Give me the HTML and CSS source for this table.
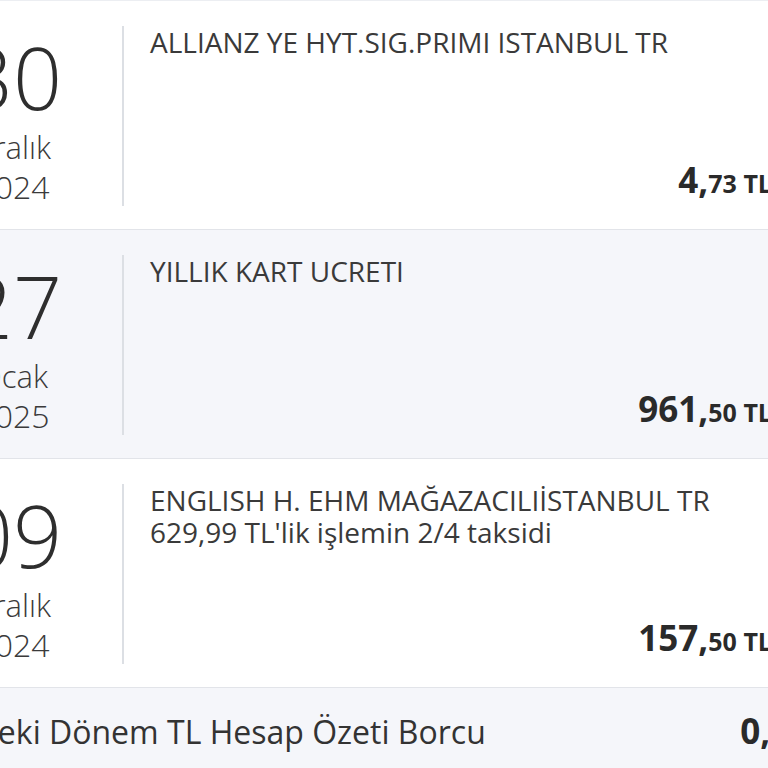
FILE: index.html
```html
<!DOCTYPE html>
<html lang="tr">
<head>
<meta charset="utf-8">
<title>Hesap Hareketleri</title>
<link rel="stylesheet" href="styles.css">
</head>
<body>
<div class="list">
  <div class="row">
    <div class="date">
      <div class="day">30</div>
      <div class="month">Aralık</div>
      <div class="year">2024</div>
    </div>
    <div class="divider"></div>
    <div class="info">
      <div class="desc">ALLIANZ YE HYT.SIG.PRIMI ISTANBUL TR</div>
      <div class="amount"><span class="big">4,</span><span class="small">73 TL</span></div>
    </div>
  </div>
  <div class="row alt">
    <div class="date">
      <div class="day">27</div>
      <div class="month">Ocak</div>
      <div class="year">2025</div>
    </div>
    <div class="divider"></div>
    <div class="info">
      <div class="desc">YILLIK KART UCRETI</div>
      <div class="amount"><span class="big">961,</span><span class="small">50 TL</span></div>
    </div>
  </div>
  <div class="row">
    <div class="date">
      <div class="day">09</div>
      <div class="month">Aralık</div>
      <div class="year">2024</div>
    </div>
    <div class="divider"></div>
    <div class="info">
      <div class="desc">ENGLISH H. EHM MAĞAZACILIİSTANBUL TR</div>
      <div class="desc">629,99 TL'lik işlemin 2/4 taksidi</div>
      <div class="amount"><span class="big">157,</span><span class="small">50 TL</span></div>
    </div>
  </div>
  <div class="footer">
    <div class="footer-label">Önceki Dönem TL Hesap Özeti Borcu</div>
    <div class="footer-amount"><span class="big">0,</span><span class="small">00 TL</span></div>
  </div>
</div>
</body>
</html>
```
FILE: styles.css
```css
html, body {
  margin: 0;
  padding: 0;
  background: #ffffff;
  overflow: hidden;
  width: 768px;
  height: 768px;
}

body {
  font-family: "Open Sans", "Noto Sans", sans-serif;
  color: #333333;
}

.list {
  margin-left: -70px;
  width: 858px;
  border-top: 1px solid #eceef2;
}

.row {
  display: flex;
  padding: 25px 16px 22px 16px;
  background: #ffffff;
  border-bottom: 1px solid #e2e4e9;
}

.row.alt {
  background: #f5f6fa;
}

.date {
  width: 134px;
  flex: none;
  text-align: center;
  padding-top: 8px;
}

.day {
  font-size: 86px;
  line-height: 86px;
  font-weight: 300;
  color: #2e2e2e;
}

.month {
  font-size: 31px;
  line-height: 40px;
  font-weight: 300;
  margin-top: 7px;
  color: #3a3a3a;
}

.year {
  font-size: 32px;
  line-height: 40px;
  font-weight: 300;
  color: #3a3a3a;
}

.divider {
  flex: none;
  width: 2px;
  height: 180px;
  margin-left: 42px;
  background: #dcdfe4;
}

.info {
  flex: 1;
  display: flex;
  flex-direction: column;
  padding-left: 26px;
  height: 180px;
}

.desc {
  font-size: 28px;
  line-height: 32px;
  color: #3a3a3a;
  white-space: nowrap;
}

.amount {
  margin-top: auto;
  margin-bottom: 3px;
  text-align: right;
  line-height: 32px;
  color: #2a2a2a;
  font-weight: 700;
}

.big {
  font-size: 35px;
}

.small {
  font-size: 25px;
}

.footer {
  display: flex;
  align-items: baseline;
  padding: 23px 16px 30px 8px;
  background: #f5f6fa;
  margin-right: -62px;
}

.footer-label {
  flex: 1;
  font-size: 32px;
  line-height: 40px;
  color: #333333;
  white-space: nowrap;
}

.footer-amount {
  font-weight: 700;
  color: #2a2a2a;
  white-space: nowrap;
  line-height: 40px;
}
```
